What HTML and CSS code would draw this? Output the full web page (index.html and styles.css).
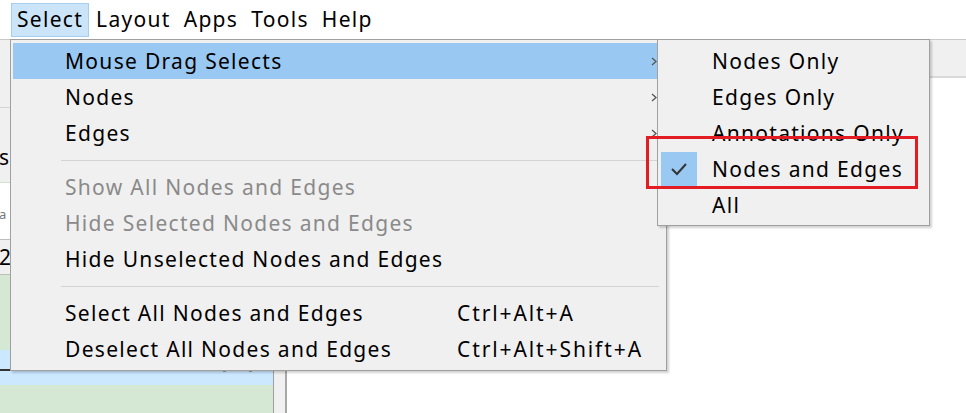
FILE: index.html
```html
<!DOCTYPE html>
<html>
<head>
<meta charset="utf-8">
<link rel="stylesheet" href="styles.css">
</head>
<body>
<div class="app">
  <div class="menubar">
    <span class="mb-item active">Select</span>
    <span class="mb-item">Layout</span>
    <span class="mb-item">Apps</span>
    <span class="mb-item">Tools</span>
    <span class="mb-item">Help</span>
  </div>
  <div class="workspace">
    <div class="leftpanel">
      <div class="lp-top"></div>
      <div class="lp-tab"><span class="clip">s</span></div>
      <div class="lp-white"><span class="clip small">a</span></div>
      <div class="lp-row"><span class="clip">2</span></div>
      <div class="lp-green"></div>
      <div class="lp-blue"><span class="dash"></span><span class="dot d1"></span><span class="dot d2"></span></div>
      <div class="lp-green2"></div>
    </div>
    <div class="splitter"></div>
    <div class="mainarea">
      <div class="toolbar"></div>
      <div class="canvas"></div>
    </div>
  </div>

  <div class="menu main-menu">
    <div class="mi hl"><span class="label">Mouse Drag Selects</span><svg class="arrow" width="6" height="9" viewBox="0 0 6 9"><path d="M1 1 L5 4.5 L1 8" fill="none" stroke="#555" stroke-width="1.3"/></svg></div>
    <div class="mi"><span class="label">Nodes</span><svg class="arrow" width="6" height="9" viewBox="0 0 6 9"><path d="M1 1 L5 4.5 L1 8" fill="none" stroke="#555" stroke-width="1.3"/></svg></div>
    <div class="mi"><span class="label">Edges</span><svg class="arrow" width="6" height="9" viewBox="0 0 6 9"><path d="M1 1 L5 4.5 L1 8" fill="none" stroke="#555" stroke-width="1.3"/></svg></div>
    <div class="sep"></div>
    <div class="mi disabled"><span class="label">Show All Nodes and Edges</span></div>
    <div class="mi disabled"><span class="label">Hide Selected Nodes and Edges</span></div>
    <div class="mi"><span class="label">Hide Unselected Nodes and Edges</span></div>
    <div class="sep"></div>
    <div class="mi"><span class="label w">Select All Nodes and Edges</span><span class="shortcut">Ctrl+Alt+A</span></div>
    <div class="mi"><span class="label w">Deselect All Nodes and Edges</span><span class="shortcut">Ctrl+Alt+Shift+A</span></div>
  </div>

  <div class="menu sub-menu">
    <div class="si"><span class="check"></span><span class="label">Nodes Only</span></div>
    <div class="si"><span class="check"></span><span class="label">Edges Only</span></div>
    <div class="si"><span class="check"></span><span class="label">Annotations Only</span></div>
    <div class="si"><span class="check on"><svg width="18" height="14" viewBox="0 0 18 14"><path d="M2 7 L7 12 L16 2" fill="none" stroke="#333" stroke-width="2"/></svg></span><span class="label">Nodes and Edges</span></div>
    <div class="si"><span class="check"></span><span class="label">All</span></div>
  </div>

  <div class="redbox"></div>
</div>
</body>
</html>
```

FILE: styles.css
```css
* { box-sizing: border-box; }
html, body { margin: 0; padding: 0; }
body {
  width: 966px;
  height: 413px;
  overflow: hidden;
  background: #ffffff;
  font-family: "Noto Sans", "Open Sans", sans-serif;
  font-size: 21px;
  letter-spacing: 1.3px;
  color: #000;
}
.app { position: relative; width: 966px; height: 413px; }

.menubar {
  height: 40px;
  display: flex;
  align-items: center;
  padding-left: 11px;
  background: #fff;
  border-bottom: 1px solid #c8c8c8;
}
.mb-item {
  height: 34px;
  line-height: 31px;
  padding: 0 5px;
  margin-right: 1px;
  border: 1px solid transparent;
}
.mb-item.active {
  background: #cce4f7;
  border-color: #a6cef0;
}

.workspace {
  display: flex;
  height: 373px;
}
.leftpanel {
  width: 273px;
  display: flex;
  flex-direction: column;
  background: #f0f0f0;
}
.lp-top { height: 68px; border-bottom: 1px solid #d5d5d5; }
.lp-tab { height: 74px; position: relative; }
.lp-white { height: 58px; background: #fff; border-top: 1px solid #cfe3cb; border-bottom: 1px solid #bdbdbd; position: relative; }
.lp-row { height: 35px; border-bottom: 1px solid #bdbdbd; position: relative; }
.lp-green { height: 75px; background: #d5e8d4; }
.lp-blue { height: 35px; background: #cce8ff; position: relative; }
.lp-green2 { flex: 1; background: #d5e8d4; }
.clip { position: absolute; left: -1px; top: 36px; line-height: 26px; }
.lp-white .clip.small { top: 18px; font-size: 13px; color: #777; }
.lp-row .clip { top: 4px; }
.dash { position: absolute; left: 0; top: 19px; width: 14px; height: 2px; background: #333; }
.dot { position: absolute; top: 20px; width: 3px; height: 2px; background: #999; }
.d1 { left: 223px; }
.d2 { left: 249px; }

.splitter {
  width: 14px;
  background: #f0f0f0;
  border-left: 1px solid #a0a0a0;
  border-right: 2px solid #a8a8a8;
}
.mainarea { flex: 1; display: flex; flex-direction: column; }
.toolbar { height: 38px; background: #f0f0f0; border-bottom: 2px solid #d9d9d9; }
.canvas { flex: 1; background: #fff; }

.menu {
  position: absolute;
  background: #f0f0f0;
  border: 1px solid #a0a0a0;
  box-shadow: 2px 2px 2px rgba(0,0,0,0.18);
  padding: 3px 2px;
}
.main-menu { left: 10px; top: 39px; width: 657px; }
.mi {
  height: 36px;
  display: flex;
  align-items: center;
  padding-left: 52px;
  position: relative;
}
.mi.hl { background: #99c9f2; }
.mi.disabled { color: #8a8a8a; }
.mi .label.w { width: 392px; }
.shortcut { white-space: nowrap; letter-spacing: 1.9px; }
.arrow { position: absolute; left: 638px; top: 14px; }
.sep { height: 18px; display: flex; align-items: center; padding-left: 48px; padding-right: 5px; }
.sep::after { content: ""; flex: 1; height: 1px; background: #d4d4d4; }

.sub-menu { left: 657px; top: 39px; width: 273px; height: 187px; padding: 3px 2px; }
.si { height: 36px; display: flex; align-items: center; }
.check { width: 36px; height: 34px; margin-left: 1px; margin-right: 15px; display: flex; align-items: center; justify-content: center; }
.check.on { background: #99c9f2; }

.redbox {
  position: absolute;
  left: 646px;
  top: 136px;
  width: 272px;
  height: 53px;
  border: 3px solid #e31b23;
}
```
